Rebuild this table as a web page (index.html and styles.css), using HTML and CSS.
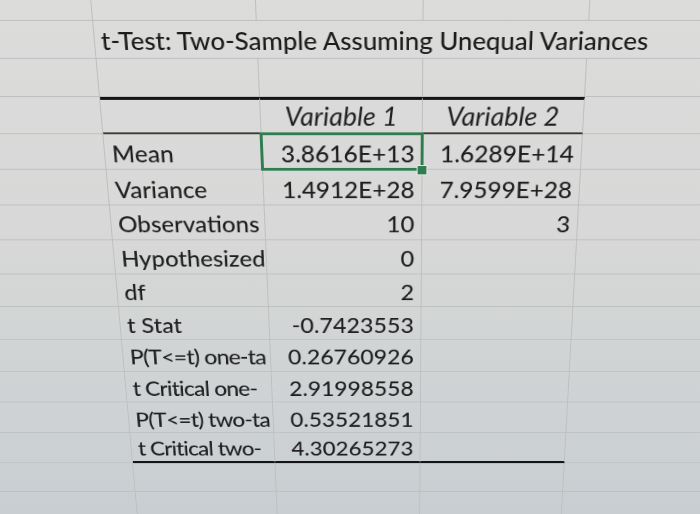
FILE: index.html
```html
<!DOCTYPE html>
<html lang="en">
<head>
<meta charset="utf-8">
<title>t-Test: Two-Sample Assuming Unequal Variances</title>
<link rel="stylesheet" href="styles.css">
</head>
<body>
<div class="viewport">
  <div class="sheet">
    <div class="cell"></div><div class="cell"></div><div class="cell"></div><div class="cell"></div><div class="cell"></div>

    <div class="cell"></div><div class="cell title">t-Test: Two-Sample Assuming Unequal Variances</div>

    <div class="cell"></div><div class="cell"></div><div class="cell"></div><div class="cell"></div><div class="cell"></div>

    <div class="cell"></div><div class="cell top-rule under"></div><div class="cell top-rule under head">Variable 1</div><div class="cell top-rule under head">Variable 2</div><div class="cell"></div>

    <div class="cell"></div><div class="cell label">Mean</div><div class="cell num selected">3.8616E+13<span class="handle"></span></div><div class="cell num">1.6289E+14</div><div class="cell"></div>

    <div class="cell"></div><div class="cell label">Variance</div><div class="cell num">1.4912E+28</div><div class="cell num">7.9599E+28</div><div class="cell"></div>

    <div class="cell"></div><div class="cell label">Observations</div><div class="cell num">10</div><div class="cell num">3</div><div class="cell"></div>

    <div class="cell"></div><div class="cell label">Hypothesized</div><div class="cell num">0</div><div class="cell"></div><div class="cell"></div>

    <div class="cell"></div><div class="cell label">df</div><div class="cell num">2</div><div class="cell"></div><div class="cell"></div>

    <div class="cell"></div><div class="cell label">t Stat</div><div class="cell num">-0.7423553</div><div class="cell"></div><div class="cell"></div>

    <div class="cell"></div><div class="cell label tight">P(T&lt;=t) one-ta</div><div class="cell num">0.26760926</div><div class="cell"></div><div class="cell"></div>

    <div class="cell"></div><div class="cell label tight">t Critical one-</div><div class="cell num">2.91998558</div><div class="cell"></div><div class="cell"></div>

    <div class="cell"></div><div class="cell label tight">P(T&lt;=t) two-ta</div><div class="cell num">0.53521851</div><div class="cell"></div><div class="cell"></div>

    <div class="cell"></div><div class="cell label tight bottom-rule">t Critical two-</div><div class="cell num bottom-rule">4.30265273</div><div class="cell bottom-rule"></div><div class="cell"></div>

    <div class="cell"></div><div class="cell"></div><div class="cell"></div><div class="cell"></div><div class="cell"></div>
    <div class="cell"></div><div class="cell"></div><div class="cell"></div><div class="cell"></div><div class="cell"></div>
    <div class="cell"></div><div class="cell"></div><div class="cell"></div><div class="cell"></div><div class="cell"></div>
  </div>
</div>
</body>
</html>
```

FILE: styles.css
```css
* { box-sizing: border-box; }

html, body {
  margin: 0;
  padding: 0;
}

body {
  width: 700px;
  height: 514px;
  overflow: hidden;
  background: linear-gradient(180deg, #dcdddb 0%, #d7d8d7 45%, #ced2d4 80%, #c9ced2 100%);
  font-family: Lato, "Open Sans", "Liberation Sans", sans-serif;
  font-weight: 500;
  color: #1f1f1f;
}

.viewport {
  width: 700px;
  height: 514px;
  overflow: hidden;
}

.sheet {
  margin-left: -100px;
  margin-top: -19.1px;
  width: 945px;
  display: grid;
  grid-template-columns: 200px 160px 163px 162px 260px;
  grid-auto-rows: 38.7px;
  transform-origin: 500px 116.1px;
  transform: perspective(891px) rotateX(-15deg);
}

.cell {
  border-right: 1px solid #bdbfbe;
  border-bottom: 1px solid #bdbfbe;
  font-size: 25px;
  white-space: nowrap;
  overflow: hidden;
  display: flex;
  align-items: center;
  padding: 3px 7px 0;
}

.title {
  grid-column: span 4;
  font-size: 25.4px;
  padding: 0 0 0 6px;
  color: #1c1c1c;
}

.label {
  justify-content: flex-start;
}

.tight {
  letter-spacing: -0.9px;
  padding-right: 0;
}

.num {
  justify-content: flex-end;
  padding-right: 7px;
}

.head {
  justify-content: center;
  font-style: italic;
  font-size: 27px;
  font-weight: 400;
  padding-top: 0;
}

.top-rule {
  border-top: 3px solid #141414;
}

.under {
  border-bottom: 2px solid #3a3a3a;
}

.bottom-rule {
  border-bottom: 3px solid #141414;
}

.selected {
  position: relative;
  overflow: visible;
}

.selected::after {
  content: "";
  position: absolute;
  left: -2px;
  top: -2px;
  right: -2px;
  bottom: -2px;
  border: 3px solid #2f7d50;
}

.handle {
  position: absolute;
  right: -6px;
  bottom: -7px;
  width: 11px;
  height: 11px;
  background: #2f7d50;
  border: 1.5px solid #e8eae8;
  z-index: 2;
}
```
